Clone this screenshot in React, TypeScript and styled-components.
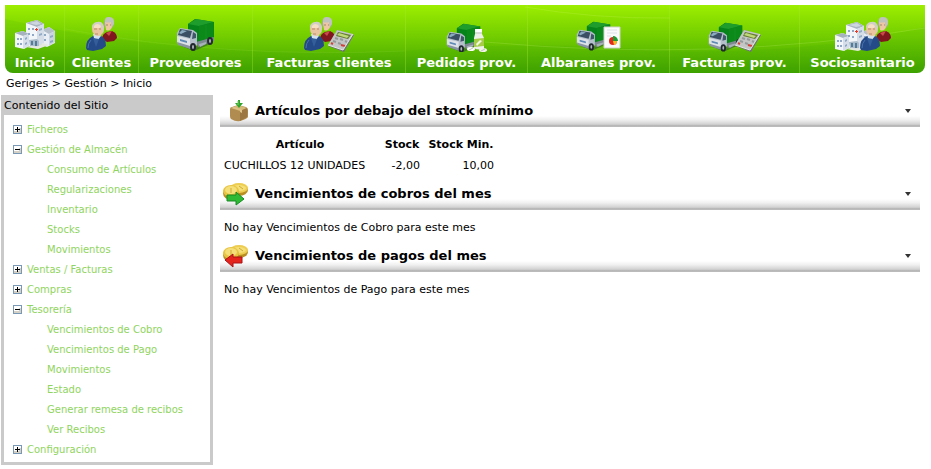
import React, { useState } from "react";
import styled, { createGlobalStyle } from "styled-components";

const GlobalStyle = createGlobalStyle`
  * { box-sizing: border-box; }
  body {
    margin: 0;
    background: #fff;
    color: #000;
    font-family: "DejaVu Sans", Verdana, sans-serif;
    font-size: 11px;
    line-height: 20px;
  }
`;

const NavBar = styled.nav`
  position: relative;
  margin: 5px 6px 0 5px;
  border-radius: 0 0 8px 8px;
  overflow: hidden;
  background: linear-gradient(#9dee00, #6fca00 50%, #3fa200);
`;

const Swoosh = styled.svg`
  position: absolute;
  inset: 0;
  width: 100%;
  height: 100%;
`;

const NavList = styled.ul`
  position: relative;
  display: grid;
  grid-template-columns: 59fr 74fr 114fr 153fr 122fr 142fr 130fr 126fr;
  margin: 0;
  padding: 0;
  list-style: none;
`;

const NavItem = styled.li`
  min-width: 0;
  & + & {
    border-left: 1px solid rgba(165, 235, 50, 0.35);
  }
`;

const NavLink = styled.a`
  display: flex;
  flex-direction: column;
  align-items: center;
  padding-top: 11px;
  color: #fff;
  font-size: 13px;
  font-weight: bold;
  line-height: 21px;
  text-decoration: none;
  white-space: nowrap;
`;

const NavIcon = styled.svg`
  display: block;
  height: 36px;
`;

const Breadcrumb = styled.div`
  padding: 1px 6px 0;
`;

const CrumbLink = styled.a`
  color: #000;
  text-decoration: none;
`;

const Columns = styled.div`
  display: flex;
  align-items: flex-start;
  gap: 7px;
  margin: 1px 11px 0 1px;
`;

const Sidebar = styled.aside`
  flex: 0 0 212px;
  border: 3px solid #cacaca;
  border-top: 0;
`;

const SidebarTitle = styled.h2`
  margin: 0;
  padding-top: 2px;
  background: #cacaca;
  font-size: 11px;
  font-weight: normal;
  line-height: 18px;
`;

const Tree = styled.ul`
  margin: 0;
  padding: 4px 0 3px 9px;
  list-style: none;
`;

const Branch = styled.ul`
  margin: 0;
  padding: 0 0 0 34px;
  list-style: none;
`;

const TreeRow = styled.div`
  display: flex;
  align-items: center;
  gap: 5px;
`;

const TreeLink = styled.a`
  display: block;
  padding-top: 2px;
  color: #8fd460;
  font-size: 10px;
  line-height: 18px;
  text-decoration: none;
`;

const Toggle = styled.button`
  display: block;
  width: 9px;
  height: 9px;
  padding: 0;
  border: 0;
  background: none;
`;

const BlockSvg = styled.svg`
  display: block;
`;

const Main = styled.main`
  flex: 1;
  min-width: 0;
`;

const PanelHeader = styled.header`
  display: flex;
  align-items: center;
  height: 32px;
  padding: 0 9px 0 2px;
  background: linear-gradient(#fff, #f0f0f0 35%, #d2d2d2 75%, #b0b0b0 90%, #c4c4c4) bottom / 100% 11px no-repeat;
`;

const PanelIcon = styled.svg`
  display: block;
  margin-right: 6px;
`;

const PanelTitle = styled.h3`
  flex: 1;
  margin: 0;
  font-size: 13px;
  line-height: 20px;
`;

const Collapse = styled.button`
  padding: 0;
  border: 0;
  background: none;
`;

const PanelBody = styled.div<{ $table?: boolean }>`
  padding: ${(p) => (p.$table ? "7px 0 2px" : "8px 4px 2px")};
`;

const StockTable = styled.table`
  border-collapse: collapse;
  line-height: 21px;
`;

const HeadCell = styled.th<{ $width: number }>`
  min-width: ${(p) => p.$width}px;
  padding: 0 4px;
`;

const Cell = styled.td<{ $number?: boolean }>`
  padding: 0 4px;
  text-align: ${(p) => (p.$number ? "right" : "left")};
`;

function Hospital() {
  return (
    <g>
      <path d="M27 14 L34 11 L40 15 V27 L32 31 L27 29Z" fill="#e9eef4" />
      <path d="M27 14 L34 11 L40 15 L34 18Z" fill="#b4bfca" />
      <path d="M34 18 L40 15 V26 L34 30Z" fill="#cbd5e1" />
      <path d="M11 7 L22 4 L29 8 V26 L22 32 L11 30Z" fill="#f3f6f9" />
      <path d="M11 7 L22 4 L29 8 L22 11Z" fill="#a9b5c0" />
      <path d="M14 7 L22 5 L26 8 L21 9Z" fill="#cdd6df" />
      <path d="M22 11 L29 8 V27 L22 31Z" fill="#d5dee8" />
      <path d="M0 17 L8 15 L14 18 V30 L9 33 L0 31Z" fill="#f4f7fa" />
      <path d="M0 17 L8 15 L14 18 L8 20Z" fill="#a6b3bf" />
      <path d="M8 20 L14 18 V30 L8 33Z" fill="#d6dfe9" />
      <path d="M2 22h2v2H2z M5 22h2v2H5z M2 27h2v2H2z M5 27h2v2H5z M10 22l2-1v2l-2 1z M10 27l2-1v2l-2 1z M13 12h2v2h-2z M17 12h2v2h-2z M13 17h2v2h-2z M17 18h2v2h-2z M29 18h2v2h-2z M29 23h2v2h-2z M35 20l3-1v2l-3 1z M35 25l3-1v2l-3 1z" fill="#8ea8c6" />
      <path d="M24 13l3-1v2l-3 1z M24 18l3-1v2l-3 1z" fill="#93abc6" />
      <path d="M21 12h1v1h1v1h-1v1h-1v-1h-1v-1h1z" fill="#ee3b22" />
      <path d="M14 24 L22 23 L24 25 V31 L15 30Z" fill="#a9bbc8" />
      <path d="M16 25h2v4h-2z M20 25h2v5h-2z" fill="#557b9b" />
      <path d="M11 31 L23 33 L34 29 L28 27 L24 30Z" fill="#e5e8df" />
    </g>
  );
}

function People() {
  return (
    <g>
      <path d="M16 23 Q16 18 21 16 L26 15 Q31 17 31 22 L28 25 L21 26Z" fill="#81171e" />
      <path d="M20 17 L23 20 L26 15" fill="#c94a48" />
      <ellipse cx="23" cy="7" rx="5" ry="6" fill="#a5aaa5" />
      <path d="M19 6 Q20 2 25 4 L26 11 Q24 16 20 14Z" fill="#edc6a4" />
      <path d="M19 6 Q18 1 23 1 Q29 1 28 8 L26 11 L25 6 Q22 7 19 6Z" fill="#bfc3bc" />
      <path d="M20 9h2 M24 9h1" stroke="#a5856d" />
      <path d="M0 32 Q0 23 7 20 L15 20 Q20 22 20 30 L16 33 L7 35 L1 34Z" fill="#244b87" />
      <path d="M8 22 L11 25 L15 20 L14 18 H7Z" fill="#d4e2ef" />
      <path d="M7 22 L10 31 L13 23" fill="#345e99" />
      <ellipse cx="12" cy="13" rx="6" ry="7" fill="#eac5a0" />
      <path d="M6 13 Q5 7 11 6 Q17 5 18 11 L17 17 L15 11 Q11 7 8 10Z" fill="#d0cec4" />
      <path d="M8 10 Q11 6 15 10 L14 12 H8Z" fill="#f6dfc2" />
      <path d="M8 13h3 M13 13h2 M9 18h3" stroke="#b58b6d" />
      <path d="M5 24 Q2 27 2 32" stroke="#4a74aa" fill="none" />
    </g>
  );
}

function Truck() {
  return (
    <g>
      <path d="M5 30 L18 35 L37 27 L36 23 L18 31Z" fill="#28522b" opacity=".55" />
      <path d="M12 8 L19 3 L38 6 V24 L23 30 L12 24Z" fill="#07831b" />
      <path d="M12 8 L20 3 L38 6 L23 10Z" fill="#1e9c2c" />
      <path d="M23 10 L38 6 V24 L23 28Z" fill="#0b8a1a" />
      <path d="M30 9v16" stroke="#129022" />
      <path d="M20 26 L38 21 V25 L22 31Z" fill="#7d888f" />
      <path d="M1 17 L4 12 L17 14 L21 17 V29 L15 33 L1 27Z" fill="#b4bfcb" />
      <path d="M4 13 L16 15 L14 22 L2 19Z" fill="#3a4f63" />
      <path d="M6 14 L11 15 L5 18 L3 17Z" fill="#8aaac0" />
      <path d="M17 16 L20 18 V22 L16 23Z" fill="#40566b" />
      <path d="M1 20 L14 23 V31 L1 27Z" fill="#dce2e7" />
      <path d="M4 23 L11 25 V27 L4 25Z" fill="#5f8ab5" />
      <path d="M1 26 L14 30 V33 L2 29Z" fill="#8995a0" />
      <ellipse cx="17" cy="31" rx="3" ry="4" fill="#20282d" />
      <ellipse cx="17" cy="31" rx="1" ry="2" fill="#aeb6ba" />
      <ellipse cx="34" cy="25" rx="3" ry="4" fill="#242c30" />
      <ellipse cx="34" cy="25" rx="1" ry="2" fill="#aeb6ba" />
      <path d="M23 28 L30 26 V28 L24 31Z" fill="#a7b1b8" />
    </g>
  );
}

function Calculator() {
  return (
    <g>
      <path d="M9 0 L26 5 L16 22 L0 16Z" fill="#707575" />
      <path d="M9 0 L25 4 L15 20 L0 15Z" fill="#c3c6c4" />
      <path d="M10 2 L23 5 L20 9 L8 6Z" fill="#647b32" />
      <path d="M11 3 L21 6 L19 8 L9 5Z" fill="#bfd978" />
      <path d="M7 8l3 1 M12 9l3 1 M17 11l2 1 M5 11l3 1 M10 13l3 1" stroke="#959b9b" strokeWidth="2" />
      <path d="M13 15l4 1 M3 13l2 1" stroke="#d0403a" strokeWidth="2" />
      <path d="M0 15 L15 20 L25 4" stroke="#e4e6e4" fill="none" />
    </g>
  );
}

function Bottle() {
  return (
    <g>
      <path d="M3 5 H10 L12 9 V19 Q7 22 2 19 V9Z" fill="#edf1ea" />
      <path d="M3 0 H10 V5 H3Z" fill="#fff" />
      <path d="M3 4h7" stroke="#acb6aa" />
      <path d="M2 10 L12 9 V17 L2 18Z" fill="#a7cd48" />
      <path d="M4 15 L8 11 L10 12 L5 17Z" fill="#f4fae1" />
      <ellipse cx="-1" cy="20" rx="4" ry="2" fill="#fff" />
      <ellipse cx="11" cy="21" rx="4" ry="2" fill="#f2f2e8" />
      <path d="M-3 21l4-2 M9 22l4-2" stroke="#bac2b6" />
    </g>
  );
}

function Report() {
  return (
    <g>
      <path d="M0 0h16v21H0z" fill="#fafafa" stroke="#ced3cb" />
      <path d="M3 3h10M3 6h10M3 9h4" stroke="#dce1e7" />
      <circle cx="9" cy="14" r="4" fill="#e22920" />
      <path d="M9 14V9a5 5 0 0 1 5 5z" fill="#1c9d34" />
      <path d="M9 14h4a4 4 0 0 1-3 4z" fill="#f0bd22" />
    </g>
  );
}

function StockBox() {
  return (
    <PanelIcon width="27" height="24" viewBox="0 0 27 24" aria-hidden="true">
      <path d="M8 10 Q8 8 10 8 L16 6 L24 8 Q26 9 26 11 V18 Q25 20 18 22 Q14 23 9 20 Q8 19 8 17Z" fill="#b18c50" />
      <path d="M9 9 L16 6 L25 9 L18 12Z" fill="#d6b878" />
      <path d="M18 12 L25 9 Q26 13 25 18 L18 22Z" fill="#9c7741" />
      <path d="M12 8l8 3v3l-2-1v-2l-8-2" fill="#e0c48e" />
      <path d="M16 1h2v3h3l-4 5-4-5h3z" fill="#30a52c" />
      <path d="M16 2v4" stroke="#75cd62" />
    </PanelIcon>
  );
}

function Coins({ incoming }: { incoming?: boolean }) {
  return (
    <PanelIcon width="27" height="24" viewBox="0 0 27 24" aria-hidden="true">
      <ellipse cx="17" cy="8" rx="9" ry="6" fill="#b98f22" />
      <ellipse cx="17" cy="6" rx="9" ry="5" fill="#edcd52" />
      <ellipse cx="17" cy="6" rx="7" ry="3" fill="#f5df78" />
      <ellipse cx="9" cy="11" rx="8" ry="7" fill="#b98f22" />
      <ellipse cx="9" cy="9" rx="8" ry="6" fill="#e8c443" />
      <ellipse cx="9" cy="8" rx="6" ry="4" fill="#f5df78" />
      <path d="M9 6v5 M17 4l4 3" stroke="#cfaa36" />
      {incoming ? (
        <path d="M5 13h9v-3l8 7-8 6v-4H5z" fill="#2fb935" stroke="#168a22" />
      ) : (
        <path d="M3 16l8-6v3h9v6h-9v4z" fill="#e5251d" stroke="#aa1114" />
      )}
    </PanelIcon>
  );
}

const sections = [
  { label: "Inicio", width: 40, icon: <Hospital /> },
  { label: "Clientes", width: 32, icon: <People /> },
  { label: "Proveedores", width: 39, icon: <Truck /> },
  { label: "Facturas clientes", width: 51, icon: <><People /><g transform="translate(24 14)"><Calculator /></g></> },
  { label: "Pedidos prov.", width: 42, icon: <><g transform="translate(0 5) scale(.9)"><Truck /></g><g transform="translate(26 13)"><Bottle /></g></> },
  { label: "Albaranes prov.", width: 45, icon: <><g transform="translate(0 3) scale(.9)"><Truck /></g><g transform="translate(28 11)"><Report /></g></> },
  { label: "Facturas prov.", width: 54, icon: <><g transform="translate(0 4) scale(.9)"><Truck /></g><g transform="translate(27 14)"><Calculator /></g></> },
  { label: "Sociosanitario", width: 56, icon: <><g transform="translate(0 2)"><Hospital /></g><g transform="translate(25 0)"><People /></g></> },
];

const tree: { label: string; children: string[]; open?: boolean }[] = [
  { label: "Ficheros", children: [] },
  {
    label: "Gestión de Almacén",
    open: true,
    children: ["Consumo de Artículos", "Regularizaciones", "Inventario", "Stocks", "Movimientos"],
  },
  { label: "Ventas / Facturas", children: [] },
  { label: "Compras", children: [] },
  {
    label: "Tesorería",
    open: true,
    children: ["Vencimientos de Cobro", "Vencimientos de Pago", "Movimientos", "Estado", "Generar remesa de recibos", "Ver Recibos"],
  },
  { label: "Configuración", children: [] },
];

function TreeNode({ label, children, open }: { label: string; children: string[]; open?: boolean }) {
  const [expanded, setExpanded] = useState(!!open);
  return (
    <li>
      <TreeRow>
        <Toggle aria-label={label} aria-expanded={expanded} onClick={() => setExpanded(!expanded)}>
          <BlockSvg width="9" height="9" viewBox="0 0 9 9" shapeRendering="crispEdges">
            <path d="M0 0h9v9H0z" fill="#7898b5" />
            <path d="M1 1h7v7H1z" fill="#fff" />
            <path d="M1 6h7v2H1z M6 3h2v5H6z" fill="#d5d1c6" />
            <path d="M2 4h5v1H2z" fill="#000" />
            {!expanded && <path d="M4 2h1v5H4z" fill="#000" />}
          </BlockSvg>
        </Toggle>
        <TreeLink href="#">{label}</TreeLink>
      </TreeRow>
      {expanded && children.length > 0 && (
        <Branch>
          {children.map((child) => (
            <li key={child}><TreeLink href="#">{child}</TreeLink></li>
          ))}
        </Branch>
      )}
    </li>
  );
}

function Panel({ title, icon, table, children }: { title: string; icon: React.ReactNode; table?: boolean; children: React.ReactNode }) {
  const [open, setOpen] = useState(true);
  return (
    <section>
      <PanelHeader>
        {icon}
        <PanelTitle>{title}</PanelTitle>
        <Collapse aria-label={title} aria-expanded={open} onClick={() => setOpen(!open)}>
          <BlockSvg width="6" height="4" viewBox="0 0 6 4" aria-hidden="true">
            <path d="M0 0h6L3 4z" fill="#333" />
          </BlockSvg>
        </Collapse>
      </PanelHeader>
      {open && <PanelBody $table={table}>{children}</PanelBody>}
    </section>
  );
}

export default function App() {
  return (
    <>
      <GlobalStyle />
      <NavBar>
        <Swoosh viewBox="0 0 920 68" preserveAspectRatio="none" aria-hidden="true">
          <path d="M0 14 Q180 55 400 46 Q520 35 660 46 Q800 50 920 22 V68 H0Z" fill="#2f9a00" opacity=".1" />
          <path d="M60 24 Q220 54 400 46" fill="none" stroke="#b9f060" opacity=".12" />
          <path d="M480 37 Q710 58 920 23" fill="none" stroke="#b9f060" opacity=".25" />
          <path d="M520 2 Q590 14 665 13" fill="none" stroke="#d0fa70" opacity=".2" />
        </Swoosh>
        <NavList>
          {sections.map((s) => (
            <NavItem key={s.label}>
              <NavLink href="#">
                <NavIcon width={s.width} height="36" viewBox={`0 0 ${s.width} 36`} aria-hidden="true">{s.icon}</NavIcon>
                {s.label}
              </NavLink>
            </NavItem>
          ))}
        </NavList>
      </NavBar>
      <Breadcrumb>
        <CrumbLink href="#">Geriges</CrumbLink> &gt; <CrumbLink href="#">Gestión</CrumbLink> &gt; Inicio
      </Breadcrumb>
      <Columns>
        <Sidebar>
          <SidebarTitle>Contenido del Sitio</SidebarTitle>
          <Tree>
            {tree.map((node) => <TreeNode key={node.label} {...node} />)}
          </Tree>
        </Sidebar>
        <Main>
          <Panel title="Artículos por debajo del stock mínimo" icon={<StockBox />} table>
            <StockTable>
              <thead>
                <tr>
                  <HeadCell scope="col" $width={160}>Artículo</HeadCell>
                  <HeadCell scope="col" $width={44}>Stock</HeadCell>
                  <HeadCell scope="col" $width={74}>Stock Min.</HeadCell>
                </tr>
              </thead>
              <tbody>
                <tr>
                  <Cell>CUCHILLOS 12 UNIDADES</Cell>
                  <Cell $number>-2,00</Cell>
                  <Cell $number>10,00</Cell>
                </tr>
              </tbody>
            </StockTable>
          </Panel>
          <Panel title="Vencimientos de cobros del mes" icon={<Coins incoming />}>
            No hay Vencimientos de Cobro para este mes
          </Panel>
          <Panel title="Vencimientos de pagos del mes" icon={<Coins />}>
            No hay Vencimientos de Pago para este mes
          </Panel>
        </Main>
      </Columns>
    </>
  );
}
